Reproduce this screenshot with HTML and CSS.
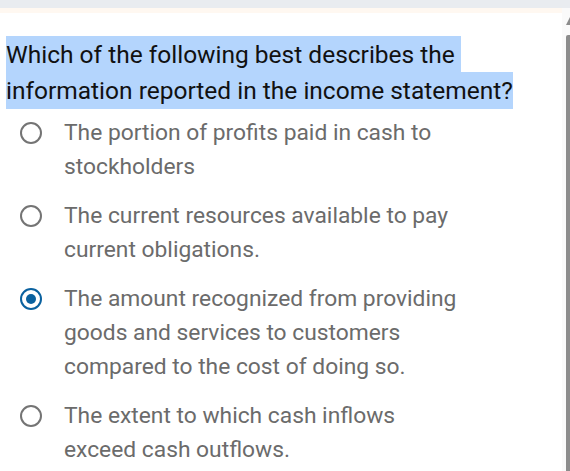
FILE: index.html
```html
<!DOCTYPE html>
<html>
<head>
<meta charset="utf-8">
<link rel="stylesheet" href="styles.css">
</head>
<body>
<div class="topbar"></div>
<div class="frame">
  <div class="content">
    <div class="strip"></div>
    <p class="question"><span class="hl">Which of the following best describes the information reported in the income statement?</span></p>
    <ul class="options">
      <li class="option"><span class="radio"></span><span class="label">The portion of profits paid in cash to stockholders</span></li>
      <li class="option"><span class="radio"></span><span class="label">The current resources available to pay current obligations.</span></li>
      <li class="option"><span class="radio checked"></span><span class="label">The amount recognized from providing goods and services to customers compared to the cost of doing so.</span></li>
      <li class="option"><span class="radio"></span><span class="label">The extent to which cash inflows exceed cash outflows.</span></li>
    </ul>
  </div>
  <div class="scrollbar">
    <div class="arrow"></div>
    <div class="thumb"></div>
  </div>
</div>
</body>
</html>
```
FILE: styles.css
```css
html, body {
  margin: 0;
  padding: 0;
  background: #ffffff;
  overflow: hidden;
}
body {
  width: 570px;
  height: 471px;
  font-family: Roboto, "Liberation Sans", sans-serif;
}
.topbar {
  height: 8px;
  background: #e9ecf0;
}
.frame {
  display: flex;
  height: 463px;
}
.content {
  flex: 1;
  min-width: 0;
}
.strip {
  height: 5px;
  background: #fff8f1;
}
.question {
  margin: 24px 0 0 0;
  padding-left: 6px;
  font-size: 24.5px;
  line-height: 36px;
  color: #111111;
  white-space: break-spaces;
  width: 540px;
}
.hl {
  background: #b4d5fd;
  padding: 3.7px 0;
  -webkit-box-decoration-break: clone;
  box-decoration-break: clone;
}
.options {
  list-style: none;
  margin: 7px 0 0 0;
  padding: 0;
  display: flex;
  flex-direction: column;
  gap: 15px;
}
.option {
  display: flex;
  align-items: flex-start;
}
.radio {
  box-sizing: border-box;
  flex: none;
  width: 22px;
  height: 22px;
  margin: 6px 22px 0 20px;
  border: 2.6px solid #747474;
  border-radius: 50%;
  display: flex;
  align-items: center;
  justify-content: center;
}
.radio.checked {
  border-color: #0a619f;
}
.radio.checked::after {
  content: "";
  width: 10px;
  height: 10px;
  border-radius: 50%;
  background: #0a619f;
}
.label {
  width: 396px;
  font-size: 22.8px;
  line-height: 34px;
  color: #6b6b6b;
}
.scrollbar {
  width: 8px;
  flex: none;
  background: #fafafa;
  display: flex;
  flex-direction: column;
  align-items: flex-end;
}
.arrow {
  margin-top: 9px;
  width: 0;
  height: 0;
  border-left: 4px solid transparent;
  border-right: 0 solid transparent;
  border-bottom: 8px solid #8c8c8c;
}
.thumb {
  margin-top: 10px;
  width: 4px;
  flex: 1;
  background: #8c8c8c;
  border-radius: 2px 0 0 0;
}
```
